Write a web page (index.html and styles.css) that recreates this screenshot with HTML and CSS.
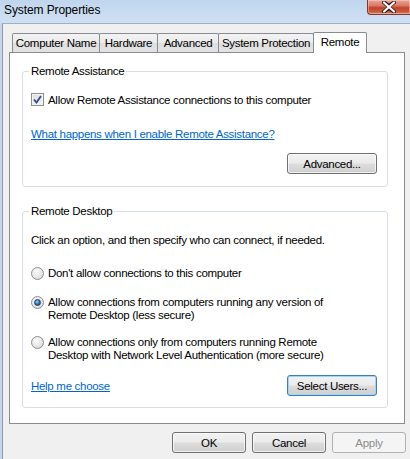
FILE: index.html
```html
<!DOCTYPE html>
<html>
<head>
<meta charset="utf-8">
<link rel="stylesheet" href="styles.css">
</head>
<body>
<div class="window">
  <div class="titlebar">
    <span class="title">System Properties</span>
    <div class="close">
      <svg width="16" height="12" viewBox="0 0 16 12"><path d="M3 1.5 L8 5.2 L13 1.5 M3 10.5 L8 6.8 L13 10.5" fill="none" stroke="#3a1a14" stroke-width="4" stroke-linecap="round"/><path d="M3 1.5 L13 10.5 M13 1.5 L3 10.5" fill="none" stroke="#ffffff" stroke-width="2.2" stroke-linecap="round"/></svg>
    </div>
  </div>
  <div class="client">
    <div class="tabs">
      <div class="tab t1">Computer Name</div>
      <div class="tab t2">Hardware</div>
      <div class="tab t3">Advanced</div>
      <div class="tab t4">System Protection</div>
      <div class="tab t5 selected">Remote</div>
    </div>
    <div class="panel">
      <fieldset class="group ra">
        <legend>Remote Assistance</legend>
        <div class="row check-row">
          <span class="checkbox"><svg width="9" height="9" viewBox="0 0 9 9"><path d="M1 4.5 L3.5 7.5 L8 1" fill="none" stroke="#2c4f86" stroke-width="1.8"/></svg></span>
          <span>Allow Remote Assistance connections to this computer</span>
        </div>
        <a class="link ra-link">What happens when I enable Remote Assistance?</a>
        <div class="btn-row ra-btn-row"><button class="btn wide">Advanced...</button></div>
      </fieldset>
      <fieldset class="group rd">
        <legend>Remote Desktop</legend>
        <div class="intro">Click an option, and then specify who can connect, if needed.</div>
        <div class="row radio-row r1"><span class="radio"></span><span>Don't allow connections to this computer</span></div>
        <div class="row radio-row r2"><span class="radio on"></span><span>Allow connections from computers running any version of<br>Remote Desktop (less secure)</span></div>
        <div class="row radio-row r3"><span class="radio"></span><span>Allow connections only from computers running Remote<br>Desktop with Network Level Authentication (more secure)</span></div>
        <div class="help-row">
          <a class="link">Help me choose</a>
          <button class="btn wide default">Select Users...</button>
        </div>
      </fieldset>
    </div>
    <div class="buttons">
      <button class="btn">OK</button>
      <button class="btn">Cancel</button>
      <button class="btn disabled">Apply</button>
    </div>
  </div>
</div>
</body>
</html>
```
FILE: styles.css
```css
* { box-sizing: border-box; }
html, body {
  margin: 0;
  padding: 0;
}
body {
  width: 410px;
  height: 459px;
  overflow: hidden;
  background: #c4d7ee;
  font-family: "Liberation Sans", Arial, sans-serif;
  font-size: 11.5px;
  letter-spacing: -0.3px;
  color: #000;
}
.window {
  width: 410px;
  height: 459px;
  display: flex;
  flex-direction: column;
}
.titlebar {
  height: 23px;
  display: flex;
  align-items: flex-start;
  background: linear-gradient(to bottom, #c0d5ee 0%, #c9dcf1 60%, #cfe0f3 100%);
}
.title {
  margin: 3px 0 0 4px;
  font-size: 12px;
  letter-spacing: -0.1px;
  line-height: 15px;
  color: #000;
}
.close {
  margin-left: auto;
  width: 43px;
  height: 15px;
  border: 1px solid #7a3a30;
  border-top: none;
  border-right: none;
  border-bottom-left-radius: 4px;
  background: linear-gradient(to bottom, #e7a597 0%, #d97a66 40%, #c2432c 55%, #c95b3f 85%, #d98a6e 100%);
  display: flex;
  align-items: center;
  justify-content: center;
  box-shadow: inset 0 0 0 1px rgba(255, 220, 210, 0.45);
}
.close svg { display: block; margin-top: -1px; }
.client {
  flex: 1;
  margin-left: 2px;
  background: #f0f0f0;
  border-left: 1px solid #8a9bb1;
  border-top: 1px solid #9fb0c4;
  display: flex;
  flex-direction: column;
}
.tabs {
  display: flex;
  align-items: flex-end;
  margin: 8px 0 0 9px;
  height: 20px;
}
.tab {
  height: 19px;
  line-height: 18px;
  text-align: center;
  white-space: nowrap;
  border: 1px solid #898c95;
  border-bottom: none;
  background: linear-gradient(to bottom, #f3f3f3 0%, #ebebeb 50%, #dedede 51%, #e3e3e3 100%);
  margin-right: -1px;
  border-top-left-radius: 2px;
  border-top-right-radius: 2px;
}
.t1 { width: 88px; }
.t2 { width: 59px; }
.t3 { width: 62px; }
.t4 { width: 96px; }
.t5 { width: 54px; }
.tab.selected {
  height: 21px;
  line-height: 18px;
  background: #fff;
  margin-bottom: -1px;
  position: relative;
  z-index: 1;
}
.panel {
  margin: 0 5px 0 6px;
  height: 372px;
  border: 1px solid #898c95;
  background: #fff;
  display: flex;
  flex-direction: column;
}
.group {
  margin: 0 16px 0 12px;
  padding: 0 10px 12px 8px;
  border: 1px solid #d5dfe5;
  border-radius: 3px;
  min-width: 0;
}
.ra { margin-top: 11px; }
.rd { margin-top: 17px; padding-bottom: 10px; }
.group legend {
  padding: 0 2px;
  margin-left: -2px;
  line-height: 14px;
}
.row {
  display: flex;
  align-items: flex-start;
  line-height: 13px;
}
.check-row { margin-top: 15px; line-height: 14px; }
.checkbox {
  width: 13px;
  height: 13px;
  border: 1px solid #8e8f8f;
  background: linear-gradient(135deg, #dcdcdc 0%, #f6f6f6 100%);
  box-shadow: inset 0 0 0 1px #f4f4f4;
  display: flex;
  align-items: center;
  justify-content: center;
  margin-right: 4px;
  flex: none;
}
.checkbox svg { display: block; }
.link {
  color: #0066cc;
  text-decoration: underline;
  line-height: 14px;
  display: block;
  cursor: pointer;
}
.ra-link { margin-top: 20px; }
.btn-row {
  display: flex;
  justify-content: flex-end;
}
.ra-btn-row { margin-top: 12px; }
.btn {
  font-family: "Liberation Sans", Arial, sans-serif;
  font-size: 11.5px;
  letter-spacing: -0.3px;
  color: #000;
  width: 74px;
  height: 21px;
  padding: 0;
  border: 1px solid #707070;
  border-radius: 3px;
  background: linear-gradient(to bottom, #f2f2f2 0%, #ebebeb 48%, #dddddd 52%, #cfcfcf 100%);
  box-shadow: inset 0 0 0 1px rgba(255, 255, 255, 0.7);
}
.btn.wide { width: 90px; }
.btn.default {
  border-color: #3c7fb1;
  box-shadow: inset 0 0 0 1px #9fd6f5;
}
.btn.disabled {
  color: #8d8d8d;
  border-color: #adb2b5;
  background: #f4f4f4;
  box-shadow: none;
}
.intro {
  margin-top: 16px;
  line-height: 13px;
}
.radio {
  width: 13px;
  height: 13px;
  border-radius: 50%;
  border: 1px solid #8e8f8f;
  background: radial-gradient(circle at 40% 35%, #fbfbfb 0%, #e6e6e6 55%, #cfcfcf 100%);
  margin-right: 4px;
  flex: none;
  display: flex;
  align-items: center;
  justify-content: center;
}
.radio.on::after {
  content: "";
  width: 7px;
  height: 7px;
  border-radius: 50%;
  background: radial-gradient(circle at 40% 35%, #a6d6f3 0%, #2d79b5 50%, #153c6c 100%);
  border: 1px solid #1d3e68;
  box-sizing: border-box;
}
.r1 { margin-top: 20px; }
.r2 { margin-top: 16px; }
.r3 { margin-top: 14px; }
.help-row {
  margin-top: 13px;
  display: flex;
  justify-content: space-between;
  align-items: center;
}
.rd { padding-bottom: 11px; }
.buttons {
  display: flex;
  justify-content: flex-end;
  gap: 6px;
  margin: 8px 4px 0 0;
}
```
